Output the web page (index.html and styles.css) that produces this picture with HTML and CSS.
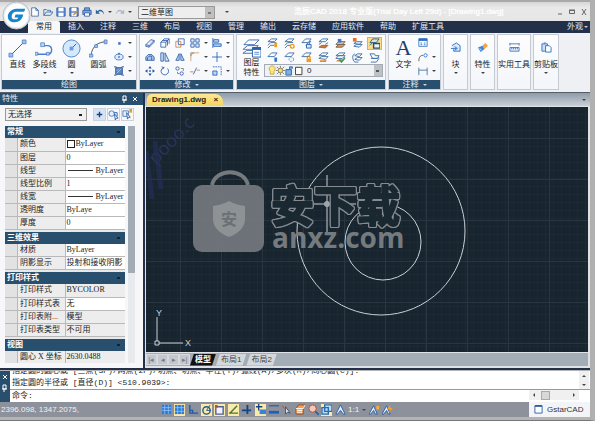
FILE: index.html
```
<!DOCTYPE html>
<html lang="zh-CN">
<head>
    <meta charset="UTF-8">
    <meta name="viewport" content="width=device-width, initial-scale=1.0">
    <title>GstarCAD</title>
    <link rel="stylesheet" href="styles.css">
</head>
<body>
<div class="app">
    <header class="titlebar">
        <button class="logo" aria-label="菜单">
            <svg viewBox="0 0 30 30">
                <circle cx="15" cy="15" r="14" fill="#e9edf0" stroke="#b4bcc4"/>
                <circle cx="15" cy="15" r="12" fill="#fff"/>
                <path d="M24 8H15C10 8 6 12 6 16c0 4 3 6 7 6 5 0 8-3 9-8h-8l-1 3h4c-1 2-2 2-4 2-2 0-3-1-3-3 0-3 2-5 5-5h8z" fill="#1585d0"/>
            </svg>
        </button>
        <div class="quick">
            <button aria-label="新建"><svg viewBox="0 0 12 12"><path d="M2 1h5l3 3v7H2zM7 1v3h3" fill="#fff" stroke="#3f66a0"/></svg></button>
            <button aria-label="打开"><svg viewBox="0 0 12 12"><path d="M1 10V3h3l1 1h4v2M1 10l3-4h8l-3 4z" fill="#dfeaf6" stroke="#3f66a0"/></svg></button>
            <button aria-label="保存"><svg viewBox="0 0 12 12"><path d="M1 1h10v10H1z" fill="#5b8fd6" stroke="#2b5aa5"/><path d="M3 1h6v4H3zM3 7h6v4H3z" fill="#fff"/></svg></button>
            <button aria-label="另存为"><svg viewBox="0 0 12 12"><path d="M1 1h10v10H1z" fill="#5b8fd6" stroke="#2b4a85"/><path d="M3 1h6v4H3zM3 7h6v4H3z" fill="#fff"/><path d="M5 9l5-5 1 1-5 5z" fill="#f0a030" stroke="#a06010" stroke-width=".5"/></svg></button>
            <button aria-label="打印"><svg viewBox="0 0 12 12"><path d="M3 4V1h6v3M1 4h10v5H1z" fill="#7fa8dc" stroke="#2b5aa5"/><path d="M3 7h6v4H3z" fill="#fff" stroke="#2b5aa5"/></svg></button>
            <button aria-label="撤销"><svg viewBox="0 0 12 12"><path d="M1 3v5h5L4 6c2-2 5-1 7 3-1-6-5-7-8-4z" fill="#2e5f9e"/></svg></button>
            <i class="arrow"></i>
            <button aria-label="重做"><svg viewBox="0 0 12 12"><path d="M11 3v5H6l2-2C6 4 3 5 1 9c1-6 5-7 8-4z" fill="#a9b7c8"/></svg></button>
            <i class="arrow"></i>
        </div>
        <select class="workspace" aria-label="工作空间"><option>二维草图</option></select>
        <i class="arrow more"></i>
        <h1>浩辰CAD 2018 专业版(Trial Day Left 29d) - [Drawing1.dwg]</h1>
        <div class="winctl">
            <button aria-label="最小化"><svg viewBox="0 0 8 8"><path d="M2 6h4" stroke="#666"/></svg></button>
            <button aria-label="最大化"><svg viewBox="0 0 8 8"><path d="M1.500 2.500h5v3h-5zM1 2h6" fill="none" stroke="#666"/></svg></button>
            <button aria-label="关闭"><svg viewBox="0 0 8 8"><path d="M2 1l4 6M6 1L2 7" stroke="#666"/></svg></button>
        </div>
    </header>

    <nav class="tabs">
        <a href="#" class="on">常用</a><a href="#">插入</a><a href="#">注释</a><a href="#">三维</a><a href="#">布局</a><a href="#">视图</a><a href="#">管理</a><a href="#">输出</a><a href="#">云存储</a><a href="#">应用软件</a><a href="#">帮助</a><a href="#">扩展工具</a>
        <a href="#" class="look">外观<i class="arrow"></i></a>
    </nav>

    <div class="ribbon">
        <section class="group draw">
            <div class="tools">
                <button class="big"><svg viewBox="0 0 20 20"><path d="M3 17L17 3" stroke="#555"/><path d="M1 15h4v4H1zM15 1h4v4h-4z" fill="#9fc0f0" stroke="#3d6fc4" stroke-width=".7"/></svg>直线</button>
                <button class="big"><svg viewBox="0 0 20 20"><path d="M2 16h11c6 0 6-9 0-9H9" fill="none" stroke="#4a7fcf" stroke-width="1.500"/><path d="M0 14h3v3H0zM12 14h3v3h-3zM6 4h4v4H6z" fill="#b8d2f5" stroke="#3d6fc4" stroke-width=".7"/></svg>多段线<i class="arrow"></i></button>
                <button class="big"><svg viewBox="0 0 20 20"><circle cx="10" cy="10" r="9" fill="#d6e8fb" stroke="#4d84cc"/><path d="M10 10l5-5" stroke="#2c5da8"/><path d="M8 8h4v4H8z" fill="#6b9be0"/></svg>圆<i class="arrow"></i></button>
                <button class="big"><svg viewBox="0 0 20 20"><path d="M2 18C3 8 9 3 18 3" fill="none" stroke="#555"/><path d="M0 16h4v3H0zM6 6h3v3H6zM16 1h3v4h-3z" fill="#9fc0f0" stroke="#3d6fc4" stroke-width=".7"/></svg>圆弧</button>
                <div class="icons pair">
                    <button aria-label="点"><svg viewBox="0 0 12 12"><path d="M5 5h3v3H5z" fill="#3d6fc4"/></svg></button><i class="arrow"></i>
                    <button aria-label="椭圆"><svg viewBox="0 0 12 12"><ellipse cx="6" cy="6" rx="5" ry="3.500" fill="#e0edfb" stroke="#3d6fc4"/><path d="M5 5h2v2H5zM5 1h2v2H5z" fill="#3d6fc4"/></svg></button><i class="arrow"></i>
                    <button aria-label="填充"><svg viewBox="0 0 12 12"><path d="M2 2h8v8H2z" fill="#5c86c6" stroke="#2c4d86"/><path d="M0 1h3M9 1h3M0 11h3M9 11h3" stroke="#2c4d86"/><path d="M3 9l6-6M3 6l3-3" stroke="#a9c8f2"/></svg></button><i class="arrow"></i>
                </div>
            </div>
            <h2>绘图</h2>
        </section>

        <section class="group modify">
            <div class="tools">
                <div class="icons four">
                    <button aria-label="删除"><svg viewBox="0 0 12 12"><path d="M1 8l6-6 4 1v2l-6 6-4-1zM1 8l4 1 6-6M5 9v2" fill="#dbe8f8" stroke="#2c5da8"/></svg></button>
                    <button aria-label="复制"><svg viewBox="0 0 12 12"><path d="M1 5h6v6H1zM3 3h6v6M5 1h6v6M1 5l4-4M7 5l4-4" fill="none" stroke="#2c5da8"/></svg></button>
                    <button aria-label="缩放"><svg viewBox="0 0 12 12"><path d="M4 1h7v7H4z" fill="none" stroke="#2c5da8"/><path d="M1 4h6v7H1z" fill="none" stroke="#d77a3d"/></svg></button>
                    <button aria-label="阵列"><svg viewBox="0 0 12 12"><path d="M1 1h4v4H1zM7 1h4v4H7zM1 7h4v4H1zM7 7h4v4H7z" fill="#e2edfa" stroke="#2c5da8"/></svg></button>
                    <button aria-label="偏移"><svg viewBox="0 0 12 12"><path d="M1 10V6l3-3h4l3 3v4zM3 10V7l2-2h3v5" fill="#a8c4e8" stroke="#2c5da8"/></svg></button>
                    <button aria-label="拉伸"><svg viewBox="0 0 12 12"><path d="M1 1h3v10H1zM6 1l5 10H6z" fill="#d0e2f8" stroke="#2c5da8"/></svg></button>
                    <button aria-label="镜像"><svg viewBox="0 0 12 12"><path d="M5 2v8H1zM7 2v8h4z" fill="#bcd4f2" stroke="#2c5da8"/></svg></button>
                    <button aria-label="圆角"><svg viewBox="0 0 12 12"><path d="M1 11V6c0-3 2-5 5-5h5" fill="none" stroke="#d79a5d"/><path d="M1 1h4M1 1v4" stroke="#777"/></svg></button>
                    <button aria-label="移动"><svg viewBox="0 0 12 12"><path d="M6 0l2 3H4zM6 12l2-3H4zM0 6l3-2v4zM12 6L9 4v4zM5 5h2v2H5z" fill="#1f4f9a"/></svg></button>
                    <button aria-label="旋转"><svg viewBox="0 0 12 12"><path d="M4 2a4.500 4.500 0 1 0 5 1M2 1l3 1-2 2" fill="none" stroke="#2c5da8"/></svg></button>
                    <button aria-label="对齐"><svg viewBox="0 0 12 12"><circle cx="3" cy="3" r="2" fill="none" stroke="#2c5da8"/><circle cx="8" cy="9" r="2" fill="none" stroke="#2c5da8"/><path d="M7 3h3v3M3 7v2h2" fill="none" stroke="#777"/></svg></button>
                    <button aria-label="修剪"><svg viewBox="0 0 12 12"><path d="M0 7h4M8 5h4" stroke="#d77a3d"/><path d="M4 10l4-8" stroke="#2c5da8"/></svg></button>
                </div>
                <div class="icons side">
                    <i class="arrow"></i><button aria-label="左对齐"><svg viewBox="0 0 12 12"><path d="M1 0v12" stroke="#1f5fb8"/><path d="M2 2h6v3H2zM2 7h9v3H2z" fill="#bcd6f6" stroke="#1f5fb8"/></svg></button><i class="arrow"></i>
                    <i class="arrow"></i><button aria-label="打断"><svg viewBox="0 0 12 12"><path d="M6 0v12M0 6h12" stroke="#1f5fb8"/></svg></button><i class="arrow"></i>
                    <i class="arrow"></i><button aria-label="比例"><svg viewBox="0 0 12 12"><path d="M1 1h10v10" fill="none" stroke="#1f5fb8" stroke-dasharray="2 1"/><path d="M1 6h5v5H1z" fill="#bcd6f6" stroke="#1f5fb8"/></svg></button><i class="arrow"></i>
                </div>
            </div>
            <h2>修改<i class="arrow"></i></h2>
        </section>

        <section class="group layers">
            <div class="tools">
                <button class="big props"><svg viewBox="0 0 20 20"><path d="M2 6l5-5h11l-5 5zM1 11l5-4h11l-4 4zM1 15l4-3h11l-4 3z" fill="#fff" stroke="#3c6fae"/><path d="M1 11h12" stroke="#e08a3c"/><path d="M11 9h9v10h-9z" fill="#fff" stroke="#2a62ad"/><path d="M11 10h9" stroke="#2a62ad" stroke-width="3"/><path d="M13 14h5M13 16h5" stroke="#5c8bd0"/></svg>图层<br>特性</button>
                <div class="layerbox">
                    <div class="icons seven">
                        <button aria-label="关闭图层"><svg viewBox="0 0 12 12"><path d="M1 4l4-3h6L8 4zM1 8l3-3h6M1 11l3-3h4" fill="none" stroke="#3f70a8"/><path d="M8 5h3v5H8z" fill="#f39a1f"/></svg></button>
                        <button aria-label="冻结图层"><svg viewBox="0 0 12 12"><path d="M1 4l4-3h6L8 4zM1 8l3-3h6M1 11l3-3h4" fill="none" stroke="#3f70a8"/><circle cx="9" cy="9" r="2" fill="#fff" stroke="#f39a1f" stroke-width="1.500"/></svg></button>
                        <button aria-label="解锁图层"><svg viewBox="0 0 12 12"><path d="M1 5l4-4h6L8 5zM5 8l3-3" fill="none" stroke="#3f70a8"/><path d="M6 7h5v4H6zM9 7V4h2" fill="#d7e6fa" stroke="#2a62ad"/></svg></button>
                        <button aria-label="图层匹配"><svg viewBox="0 0 12 12"><path d="M1 4l4-3h6L8 4zM1 7l3-2M8 7l3-2" fill="none" stroke="#3f70a8"/><path d="M1 10l3-2h7L8 11z" fill="#d8772a" stroke="#44494f" stroke-width=".6"/></svg></button>
                        <button aria-label="图层状态"><svg viewBox="0 0 12 12"><path d="M1 10l3-3h7L8 10z" fill="#e89a58" stroke="#6a5a50"/><path d="M1 7l3-3h7L8 7z" fill="#f4c79c" stroke="#6a5a50"/><path d="M3 1h4v4H3z" fill="#3f79cc"/></svg></button>
                        <button aria-label="新图层"><svg viewBox="0 0 12 12"><path d="M2 6l3-2h6L8 7zM2 9l3-2h6L8 10z" fill="#eaf1fa" stroke="#3f70a8"/><path d="M1 0h4v4H1z" fill="#e07036"/></svg></button>
                        <button class="hot" aria-label="隔离"><svg viewBox="0 0 12 12"><path d="M1 5l3-4h7L8 5zM1 8l3-3" fill="#d4e2ee" stroke="#2f5b86"/><path d="M5 6h7v5H5z" fill="#e8f0f8" stroke="#244f7c" stroke-width="1.500"/></svg></button>
                        <button aria-label="打开图层"><svg viewBox="0 0 12 12"><path d="M1 5l4-4h6L8 5z" fill="none" stroke="#3f70a8"/><path d="M8 6h3v4l-1 1H9L8 10z" fill="#3475d0"/></svg></button>
                        <button aria-label="解冻图层"><svg viewBox="0 0 12 12"><path d="M1 5l4-4h6L8 5z" fill="none" stroke="#3f70a8"/><circle cx="8" cy="8" r="2.500" fill="#eef5fd" stroke="#5a91dd" stroke-dasharray="2 1"/></svg></button>
                        <button aria-label="锁定图层"><svg viewBox="0 0 12 12"><path d="M1 5l4-4h6L8 5z" fill="none" stroke="#3f70a8"/><path d="M7 7V5h3v2" fill="none" stroke="#c47216"/><path d="M6 7h5v4H6z" fill="#f39a1f"/></svg></button>
                        <button aria-label="置为当前"><svg viewBox="0 0 12 12"><path d="M1 4l4-3h6L8 4zM1 7l3-2h7L8 8z" fill="#fff" stroke="#3f70a8"/><path d="M2 9h5l2-1v3H2z" fill="#e28b2b"/></svg></button>
                        <button aria-label="应用"><svg viewBox="0 0 12 12"><path d="M1 4l4-3h6L8 4zM1 7l3-3h7L8 7z" fill="#fff" stroke="#3f70a8"/><path d="M1 10l3-2h7l-3 3z" fill="#e8823c"/><path d="M5 8l2 3 4-5" fill="none" stroke="#3b9b4b" stroke-width="1.500"/></svg></button>
                        <button aria-label="上一个"><svg viewBox="0 0 12 12"><path d="M3 4l3-2h5L8 5zM3 8l3-2h5L8 9zM3 2C0 3 0 8 3 11h4" fill="none" stroke="#3f70a8"/></svg></button>
                        <button aria-label="漫游"><svg viewBox="0 0 12 12"><path d="M1 2h5l1 2h4L9 7H4zM2 7h7l2-1M2 11h6l3-4" fill="none" stroke="#3f70a8"/></svg></button>
                    </div>
                    <label class="combo">
                        <svg viewBox="0 0 38 12"><path d="M3 7C0 3 3 1 5 1s5 2 2 6v3H3z" fill="#ffe77c" stroke="#a98c30" stroke-width=".7"/><circle cx="14" cy="6" r="2.500" fill="#ffe24d" stroke="#555" stroke-width=".7"/><path d="M14 1v2M14 9v2M9 6h2M17 6h2M10 2l2 2M18 2l-2 2M10 10l2-2M18 10l-2-2" stroke="#555" stroke-width=".8"/><path d="M20 5h6v6h-6zM24 5V2h3v2" fill="#7fb0e8" stroke="#2a62ad"/><path d="M30.500 2.500h7v8h-7z" fill="#fff" stroke="#333"/></svg>
                        <select aria-label="图层"><option>0</option></select>
                    </label>
                </div>
            </div>
            <h2>图层<i class="arrow"></i></h2>
        </section>

        <section class="group note">
            <div class="tools">
                <button class="big"><span class="letter">A</span>文字</button>
                <div class="icons pair">
                    <button aria-label="表格"><svg viewBox="0 0 12 12"><path d="M1 1h10v9H1z" fill="#fff" stroke="#2a6fc4"/><path d="M1 2h10" stroke="#2a6fc4" stroke-width="3"/><path d="M3 6h2M7 6h2M3 8h2M7 8h2" stroke="#2a6fc4"/></svg></button><i class="blank"></i>
                    <button aria-label="引线"><svg viewBox="0 0 12 12"><path d="M1 11c0-5 2-7 5-7" fill="none" stroke="#444"/><circle cx="9" cy="4" r="2" fill="#fff" stroke="#2a6fc4"/></svg></button><i class="arrow"></i>
                    <button aria-label="标注"><svg viewBox="0 0 12 12"><path d="M1 2v9M11 2v9M1 5h10" stroke="#3d6fa4"/></svg></button><i class="arrow"></i>
                </div>
            </div>
            <h2>注释<i class="arrow"></i></h2>
        </section>

        <section class="group mini"><button class="big"><svg viewBox="0 0 12 12"><path d="M2 4l5-3 4 3v6H4V8" fill="#dce9f9" stroke="#2a6fc4"/><path d="M1 7h6M5 5l3 2-3 2" fill="none" stroke="#2a6fc4"/></svg>块<i class="arrow"></i></button></section>
        <section class="group mini"><button class="big"><svg viewBox="0 0 12 12"><path d="M6 4l3-3 3 3-4 4z" fill="#f5a33a"/><path d="M1 6l5-2 2 4-4 3z" fill="#3f82dc"/><path d="M3 7l2 2" stroke="#fff"/></svg>特性<i class="arrow"></i></button></section>
        <section class="group mini"><button class="big"><svg viewBox="0 0 12 12"><path d="M1 2h10M1 1v3M11 1v3" stroke="#4a7cbc"/><path d="M1 6h10v4H1zM3 6v2M5 6v2M7 6v2M9 6v2" fill="#e4effb" stroke="#4a7cbc"/></svg>实用工具</button></section>
        <section class="group mini"><button class="big"><svg viewBox="0 0 12 12"><path d="M1 2h6v8H1zM3 1h2" fill="#c9def6" stroke="#3474c4"/><path d="M5 4h4l2 2v5H5z" fill="#fff" stroke="#3474c4"/></svg>剪贴板<i class="arrow"></i></button></section>
    </div>

    <main class="work">
        <aside class="panel">
            <div class="panelhead"><h2>特性</h2><button aria-label="固定"><svg viewBox="0 0 8 8"><path d="M2 1h3v4H2zM1 5h5M3 5v3" fill="none" stroke="#fff"/></svg></button><button aria-label="关闭"><svg viewBox="0 0 8 8"><path d="M2 2l4 4M6 2L2 6" stroke="#fff"/></svg></button></div>
            <div class="pick">
                <select aria-label="选择"><option>无选择</option></select>
                <button aria-label="添加"><svg viewBox="0 0 12 12"><path d="M0 0h12v12H0z" fill="#d4e4f6"/><path d="M6 3v6M3 6h6" stroke="#1d3f74" stroke-width="1.500"/></svg></button>
                <button aria-label="选择对象"><svg viewBox="0 0 12 12"><circle cx="4" cy="5" r="3" fill="#e4effb" stroke="#4f80bd"/><path d="M6 4h4v4M7 5l4 5-2 0-1 2z" fill="#fff" stroke="#2a5fa8"/></svg></button>
                <button aria-label="快速选择"><svg viewBox="0 0 12 12"><path d="M1 2h6v6H1z" fill="#e4effb" stroke="#4f80bd"/><path d="M8 0h3v4H8z" fill="#f39a1f"/><path d="M5 4l4 5H7l-1 2z" fill="#fff" stroke="#2a5fa8"/></svg></button>
            </div>
            <div class="propwrap">
                <div class="proplist">
                    <table>
                        <caption>常规</caption>
                        <tr><th>颜色</th><td><i class="swatch"></i>ByLayer</td></tr>
                        <tr><th>图层</th><td>0</td></tr>
                        <tr><th>线型</th><td><i class="line"></i>ByLayer</td></tr>
                        <tr><th>线型比例</th><td>1</td></tr>
                        <tr><th>线宽</th><td><i class="line"></i>ByLayer</td></tr>
                        <tr><th>透明度</th><td>ByLaye</td></tr>
                        <tr><th>厚度</th><td>0</td></tr>
                    </table>
                    <table>
                        <caption>三维效果</caption>
                        <tr><th>材质</th><td>ByLayer</td></tr>
                        <tr><th>阴影显示</th><td>投射和接收阴影</td></tr>
                    </table>
                    <table>
                        <caption>打印样式</caption>
                        <tr><th>打印样式</th><td class="off">BYCOLOR</td></tr>
                        <tr><th>打印样式表</th><td>无</td></tr>
                        <tr><th>打印表附...</th><td class="off">模型</td></tr>
                        <tr><th>打印表类型</th><td class="off">不可用</td></tr>
                    </table>
                    <table>
                        <caption>视图</caption>
                        <tr><th>圆心 X 坐标</th><td class="off">2630.0488</td></tr>
                    </table>
                </div>
                <div class="scroll"></div>
            </div>
        </aside>

        <section class="doc">
            <div class="doctabs"><a href="#">Drawing1.dwg <span>×</span></a><i class="arrow"></i></div>
            <div class="canvas">
                <svg>
                    <g class="stain"><text transform="translate(10 58) rotate(-46)">pooo.c</text><path d="M0 44l6 48M9 34l6 48"/></g>
                    <g fill="none" stroke="#c9d0d4">
                        <circle cx="235" cy="124" r="84"/>
                        <circle cx="237" cy="135" r="38"/>
                        <path d="M181 68v58M154 97h56M179 95h4v4h-4z"/>
                        <path d="M9 234h4v4H9zM11 234v-24M13 236h24"/>
                    </g>
                    <text class="axis" x="10" y="209">Y</text>
                    <text class="axis" x="39" y="239">X</text>
                    <g class="mark">
                        <path d="M66 78C70 61 98 61 102 78" fill="none" stroke="#747a7e" stroke-width="4"/>
                        <rect x="47" y="78" width="71" height="67" rx="9" fill="#747a7e" fill-opacity=".92"/>
                        <path d="M67 99q9-1 16-5 7 4 16 5v14q-1 11-16 17-15-6-16-17z" fill="#8d9295"/>
                        <text class="seal" x="75" y="118">安</text>
                        <text class="name" x="125" y="115">安下载</text>
                        <text class="site" x="126" y="141">anxz.com</text>
                    </g>
                </svg>
            </div>
            <div class="layouts">
                <button aria-label="首个">|◂</button><button aria-label="上一个">◂</button><button aria-label="下一个">▸</button><button aria-label="末个">▸|</button>
                <a href="#" class="on">模型</a><a href="#">布局1</a><a href="#">布局2</a>
            </div>
        </section>
    </main>

    <section class="command">
        <div class="grip"><button aria-label="关闭"><svg viewBox="0 0 8 8"><path d="M2 2l4 4M6 2L2 6" stroke="#fff"/></svg></button><button aria-label="固定"><svg viewBox="0 0 8 8"><path d="M2 1h3v4H2zM1 5h5M3 5v3" fill="none" stroke="#fff"/></svg></button></div>
        <div class="cmdbody">
            <div class="history">
                <div class="lines">
                    <p>指定圆的圆心或 [三点(3P)/两点(2P)/切点、切点、半径(T)/弧线(A)/多次(M)/同心圆(C)]:</p>
                    <p>指定圆的半径或 [直径(D)] &lt;510.9039&gt;:</p>
                </div>
                <div class="updown"><i class="arrow up"></i><i class="arrow"></i></div>
            </div>
            <div class="entry">
                <label for="cmd">命令:</label><input id="cmd" type="text">
                <div class="leftright"><i class="arrow left"></i><b></b><i class="arrow right"></i></div>
            </div>
        </div>
    </section>

    <footer class="status">
        <span class="coords">2396.098, 1347.2075,</span>
        <div class="modes">
            <button aria-label="捕捉"><svg viewBox="0 0 12 12"><path d="M1 1h10v10H1z" fill="#2d7bd8"/><path d="M1 4h10M1 7h10M4 1v10M8 1v10" stroke="#a9d0f8" stroke-width=".7"/></svg></button>
            <button class="lit" aria-label="栅格"><svg viewBox="0 0 12 12"><path d="M1 1h10v10H1z" fill="#2d7bd8"/><path d="M1 4h10M1 8h10M4 1v10M8 1v10" stroke="#a9d0f8" stroke-width=".7"/></svg></button>
            <button aria-label="正交"><svg viewBox="0 0 12 12"><path d="M2 1v9h9M2 7h3v3" fill="none" stroke="#1f5aa8" stroke-width="1.500"/></svg></button>
            <button class="lit" aria-label="极轴"><svg viewBox="0 0 12 12"><circle cx="6" cy="7" r="4" fill="none" stroke="#22598f" stroke-width="1.500"/><path d="M6 7h5M6 7l4-6" stroke="#22598f"/></svg></button>
            <button class="lit" aria-label="对象捕捉"><svg viewBox="0 0 12 12"><path d="M2 3h8v8H2z" fill="#f3f3ff" stroke="#4d5f98" stroke-width="1.500"/><path d="M1 1h3v3H1z" fill="#c34f37"/></svg></button>
            <button class="lit" aria-label="追踪"><svg viewBox="0 0 12 12"><path d="M1 10h10M2 10l8-8" stroke="#49743a" stroke-width="1.500"/></svg></button>
            <button aria-label="动态UCS"><svg viewBox="0 0 12 12"><path d="M7 1v10M1 7h10" stroke="#124682" stroke-width="2"/></svg></button>
            <button class="lit" aria-label="动态输入"><svg viewBox="0 0 12 12"><path d="M4 0v7M1 3h7" stroke="#124682" stroke-width="1.500"/><path d="M5 6h7v5H5z" fill="#3a83d8"/></svg></button>
            <button aria-label="线宽"><svg viewBox="0 0 12 12"><path d="M1 2h11" stroke="#174d91"/><path d="M1 9h11" stroke="#1f5fb8" stroke-width="3"/></svg></button>
            <button aria-label="循环选择"><svg viewBox="0 0 12 12"><path d="M1 2l3 3" stroke="#b14830"/><path d="M5 3v8l2-2 3 1z" fill="#e4ecf5" stroke="#3d4b60"/></svg></button>
            <button aria-label="三维"><svg viewBox="0 0 12 12"><path d="M1 5l3-4h7L9 5v6H1z" fill="#f5a04a" stroke="#a24c1c"/><path d="M1 5h8l2-4M2 7h6M2 9h6" stroke="#fff" fill="none"/></svg></button>
            <button aria-label="缩放"><svg viewBox="0 0 12 12"><circle cx="5" cy="5" r="4" fill="#f8c6b4" stroke="#bd4c35"/><path d="M8 8l4 4" stroke="#345f96" stroke-width="2"/></svg></button>
            <button class="lit" aria-label="视口"><svg viewBox="0 0 12 12"><path d="M4 1h8v7H4zM1 4h7v7H1z" fill="#b9dbf7" stroke="#286cae" stroke-width="1.500"/></svg></button>
            <button aria-label="注释比例"><svg viewBox="0 0 12 12"><path d="M6 1l5 10H9L6 7l-3 4H1z" fill="#e5f1fc" stroke="#245ea7"/></svg></button>
            <button class="scale">1:1<i class="arrow"></i></button>
            <button aria-label="注释可见性"><svg viewBox="0 0 12 12"><path d="M5 2l4 9H7L5 7l-3 4H0z" fill="#e5f1fc" stroke="#245ea7"/><path d="M8 2h3v4H8z" fill="#f5b13a"/></svg></button>
            <button aria-label="自动比例"><svg viewBox="0 0 12 12"><path d="M5 2l4 9H7L5 7l-3 4H0z" fill="#e5f1fc" stroke="#245ea7"/><path d="M8 1L6 6h3l-2 4 5-6H9z" fill="#f5a02a"/></svg></button>
        </div>
        <div class="brand"><svg viewBox="0 0 10 10"><path d="M1 1h8v8H1z" fill="#fff" stroke="#2d5f9e"/><path d="M1 1h8" stroke="#2d5f9e" stroke-width="2"/></svg>GstarCAD</div>
    </footer>
</div>
</body>
</html>
```
FILE: styles.css
```
*{box-sizing: border-box;margin: 0;padding: 0;}
body{
    padding: 0 9px 5px 0;
    background: #fff;
    color: #222;
    font: 8px/12px "Liberation Sans", "Noto Sans CJK SC", sans-serif;
}
button,select,input{font: inherit;color: inherit;border: 0;background: none;appearance: none;border-radius: 0;}
button{display: flex;align-items: center;justify-content: center;}
a{color: inherit;text-decoration: none;}
h1,h2{font-size: 8px;font-weight: normal;}
svg{display: block;}

.app{
    display: flex;
    flex-direction: column;
    height: calc(100vh - 5px);
    padding-bottom: 3px;
    border-right: 5px solid #b0b0b0;
    border-bottom: 1px solid #777;
    background: #b4b4b4;
}
.arrow{
    width: 4px;
    height: 0;
    flex: none;
    border: 2px solid transparent;
    border-top-color: #444;
    border-bottom: 0;
}
.arrow.up{border-top: 0;border-bottom: 2px solid #444;}
.arrow.left{border: 2px solid transparent;border-right-color: #444;border-left: 0;height: 4px;width: 2px;}
.arrow.right{border: 2px solid transparent;border-left-color: #444;border-right: 0;height: 4px;width: 2px;}

/* title bar */
.titlebar{
    position: relative;
    display: flex;
    align-items: center;
    height: 21px;
    flex: none;
    padding: 1px 2px 0 30px;
    border-top: 2px solid #a9a9a9;
    background: linear-gradient(#d6d6d6, #e9e9e9 30%, #e6e6e6);
}
.logo{position: absolute;left: 2px;top: -1px;width: 29px;height: 29px;z-index: 2;}
.logo svg{width: 29px;height: 29px;}
.quick{display: flex;align-items: center;gap: 3px;width: 108px;}
.quick svg{width: 10px;height: 10px;}
.workspace{
    width: 77px;
    height: 13px;
    padding: 0 2px;
    border: 1px solid #999;
    background: linear-gradient(#777, #777) no-repeat right 3px top 5px / 3px 2px, linear-gradient(90deg, #eee calc(100% - 9px), #c0c0c0 0);
}
.more{margin-left: 10px;}
.titlebar h1{flex: 1;padding-left: 65px;color: #fff;text-shadow: 0 0 1px #fff;white-space: nowrap;overflow: hidden;}
.winctl{display: flex;gap: 4px;}
.winctl svg{width: 8px;height: 8px;}

.tabs{
    display: flex;
    flex: none;
    height: 12px;
    padding-left: 28px;
    background: #22304a;
    color: #e8ecf2;
}
.tabs a{padding: 0 8px;}
.tabs .on{background: #f7f8fa;color: #222;border-radius: 2px 2px 0 0;}
.tabs .look{display: flex;align-items: center;gap: 1px;margin-left: auto;padding: 0 2px;}
.look .arrow{border-top-color: #ccd;}

/* ribbon */
.ribbon{
    display: flex;
    flex: none;
    gap: 2px;
    padding: 1px 1px 2px;
    background: #eef0f3;
    border-bottom: 1px solid #555f68;
}
.group{
    display: flex;
    flex-direction: column;
    border: 1px solid #c4cbd2;
    background: linear-gradient(#fdfdfe, #f3f6fa);
    height: 56px;
}
.group h2{
    display: flex;
    align-items: center;
    justify-content: center;
    gap: 4px;
    margin-top: auto;
    height: 9px;
    background: #28506e;
    color: #e4ebf2;
}
.group h2 .arrow{border-top-color: #c7d4e0;}
.draw{width: 136px;}
.modify{width: 95px;}
.layers{width: 150px;}
.note{width: 53px;}
.tools{display: flex;padding: 1px 2px 0;}
.big{flex-direction: column;justify-content: flex-start;line-height: 10px;white-space: nowrap;}
.big svg{width: 19px;height: 19px;margin: 3px 0 2px;}
.big .arrow{margin-top: 2px;}
.draw .big{width: 27px;}
.icons{display: grid;align-content: start;align-items: center;justify-items: center;grid-auto-rows: 14px;}
.icons svg{width: 10px;height: 10px;}
.pair{grid-template-columns: 14px 8px;}
.four{grid-template-columns: repeat(4, 15px);}
.side{grid-template-columns: 8px 14px 8px;}
.seven{grid-template-columns: repeat(7, 17px);grid-auto-rows: 14px;}
.seven svg{width: 11px;height: 11px;}
.seven .hot{background: #f8dc86;outline: 1px solid #d9b450;padding: 0 1px;}
.props{width: 26px;}
.props svg{margin: 3px 0 0;}
.layerbox{flex: 1;}
.combo{
    display: flex;
    align-items: center;
    height: 13px;
    border: 1px solid #a4abb2;
    background: #f0f1f3;
}
.combo svg{width: 38px;height: 11px;flex: none;margin-left: 1px;}
.combo select{
    flex: 1;
    height: 11px;
    padding-left: 3px;
    background: linear-gradient(#555, #555) no-repeat right 3px top 5px / 3px 2px, linear-gradient(90deg, transparent calc(100% - 8px), #bcc1c6 0);
}
.note .big{width: 28px;}
.letter{font: 22px/24px "Liberation Serif", serif;color: #1c3f70;}
.mini{min-width: 25px;align-items: center;}
.mini svg{width: 11px;height: 11px;margin: 7px 0 7px;}

/* workspace: property panel and drawing */
.work{display: flex;flex: 1;min-height: 0;border-bottom: 2px solid #22304a;}
.panel{
    display: flex;
    flex-direction: column;
    flex: none;
    width: 143px;
    padding-bottom: 5px;
    background: #f7f7f9;
}
.panelhead{display: flex;align-items: center;gap: 2px;height: 12px;flex: none;padding: 0 4px 0 2px;background: #28506e;color: #e8eef4;}
.panelhead h2{flex: 1;}
.panelhead svg,.grip svg{width: 8px;height: 8px;}
.pick{display: flex;gap: 1px;padding: 3px 8px 5px 5px;}
.pick select{
    width: 82px;
    height: 13px;
    margin-right: 5px;
    padding: 0 2px;
    border: 1px solid #999;
    background: linear-gradient(#222, #222) no-repeat right 4px top 5px / 3px 2px, #f0f0f0;
}
.pick button{width: 13px;height: 13px;border: 1px solid #ccd2da;}
.pick svg{width: 11px;height: 11px;}
.propwrap{display: flex;gap: 3px;flex: 1;min-height: 0;padding: 0 8px 0 5px;}
.proplist{flex: 1;overflow: hidden;font-family: "Liberation Serif", "Noto Sans CJK SC", serif;background: #e8e8e8;}
.proplist table{width: 100%;border-collapse: collapse;table-layout: fixed;margin-bottom: 2px;}
.proplist caption{
    height: 12px;
    padding-left: 2px;
    text-align: left;
    font-weight: bold;
    background: linear-gradient(#123, #123) no-repeat right 5px top 5px / 3px 2px, #28506e;
    color: #fff;
}
.proplist tr{height: 13px;}
.proplist th,.proplist td{
    height: 13px;
    line-height: 12px;
    border-bottom: 1px solid #b9b9b9;
    font-weight: normal;
    text-align: left;
    white-space: nowrap;
    overflow: hidden;
}
.proplist th{width: 60px;padding-left: 15px;background: linear-gradient(90deg, #e2e2e2 12px, #b9b9b9 12px, #b9b9b9 13px, #ededed 13px);}
.proplist td{padding-left: 1px;border-left: 1px solid #b9b9b9;background: #fff;}
.proplist td.off{background: #ededed;}
.swatch{display: inline-block;width: 8px;height: 8px;margin-right: 1px;border: 1px solid #222;vertical-align: middle;}
.line{display: inline-block;width: 25px;margin: 0 3px 0 1px;border-top: 1px solid #333;vertical-align: middle;}
.scroll{width: 7px;background: linear-gradient(#a3abb4 62%, #e8eaed 0);}

.doc{
    display: flex;
    flex-direction: column;
    flex: 1;
    min-width: 0;
    border-left: 2px solid #22304a;
    background: #dfe3e8;
}
.doctabs{
    display: flex;
    align-items: center;
    height: 13px;
    flex: none;
    padding: 1px 4px 0 2px;
    background: linear-gradient(#8f9ba7, #c9d0d9);
}
.doctabs a{
    padding: 0 5px;
    border-radius: 5px 8px 0 0;
    background: linear-gradient(#fbe995, #f2d45c);
    font-weight: bold;
}
.doctabs span{margin-left: 5px;}
.doctabs .arrow{margin-left: auto;}
.canvas{
    flex: 1;
    min-height: 0;
    margin: 1px 2px 1px 1px;
    background:
        repeating-linear-gradient(90deg, transparent 0 34px, #273640 34px 35px, transparent 35px 41px),
        repeating-linear-gradient(transparent 0 31px, #273640 31px 32px, transparent 32px 41px),
        repeating-linear-gradient(90deg, transparent 0 7px, #1b2a34 7px 8px),
        repeating-linear-gradient(#18242e 0 7px, #1b2a34 7px 8px);
}
.canvas svg{width: 100%;height: 100%;}
.axis{font-size: 9px;fill: #c9d0d4;}
.stain{fill: #29345a;}
.stain text{font: 18px "Open Sans", sans-serif;}
.stain path{stroke: #232f55;stroke-width: 5px;fill: none;opacity: .7;}
.name{
    font: bold 43px "Noto Sans CJK SC", sans-serif;
    fill: #1a2832;
    stroke: #1a2832;
    stroke-width: 2px;
    stroke-linejoin: round;
    filter: drop-shadow(1px 0 0 #858b8f) drop-shadow(-1px 0 0 #858b8f) drop-shadow(0 1px 0 #858b8f) drop-shadow(0 -1px 0 #858b8f);
}
.site{font: bold 28px "Open Sans", sans-serif;fill: #747a7e;}
.seal{font: bold 16px "Noto Sans CJK SC", sans-serif;fill: #6a7074;}
.layouts{
    display: flex;
    align-items: center;
    flex: none;
    height: 13px;
    margin: 0 2px 2px 1px;
    background: #a3adb6;
    color: #444;
}
.layouts button{width: 11px;height: 11px;background: #c2c8ce;border: 1px solid #d5dade;font-size: 7px;color: #777;}
.layouts a{padding: 0 5px;background: #d4d8dc;clip-path: polygon(4px 0, 100% 0, calc(100% - 4px) 100%, 0 100%);}
.layouts .on{background: #111;color: #fff;font-weight: bold;}

/* command line */
.command{display: flex;flex: none;margin-top: 1px;background: #fff;}
.grip{display: flex;flex-direction: column;gap: 3px;width: 10px;padding: 2px 1px;background: #28506e;}
.cmdbody{flex: 1;min-width: 0;font-family: "Liberation Mono", "Noto Sans CJK SC", monospace;}
.history{display: flex;height: 19px;border-bottom: 1px solid #999;}
.lines{display: flex;flex-direction: column;justify-content: flex-end;flex: 1;overflow: hidden;padding-left: 2px;white-space: nowrap;}
.updown{display: flex;flex-direction: column;align-items: center;justify-content: space-around;width: 10px;margin-right: 1px;background: #f0f0f0;}
.entry{display: flex;align-items: flex-start;height: 12px;padding-left: 2px;}
.entry input{flex: 1;min-width: 0;height: 12px;outline: 0;}
.leftright{display: flex;align-items: center;justify-content: space-between;width: 50px;height: 10px;margin-right: 11px;padding: 0 4px;background: #f0f0f0;}
.leftright b{width: 9px;height: 9px;margin-right: 18px;border: 1px solid #aaa;background: #d8d8d8;}

/* status bar */
.status{display: flex;align-items: center;flex: none;height: 15px;background: #8d919b;color: #f2f2f2;}
.coords{width: 161px;padding-left: 1px;}
.modes{display: flex;justify-content: space-between;flex: 0 1 232px;}
.modes button{height: 12px;}
.modes svg{width: 11px;height: 11px;}
.modes .lit{background: #fbeaa8;}
.modes .scale{gap: 3px;}
.brand{
    display: flex;
    align-items: center;
    gap: 4px;
    width: 61px;
    height: 15px;
    margin-left: auto;
    padding-left: 5px;
    background: #f3f4f7;
    color: #333;
}
.brand svg{width: 9px;height: 9px;}
```
